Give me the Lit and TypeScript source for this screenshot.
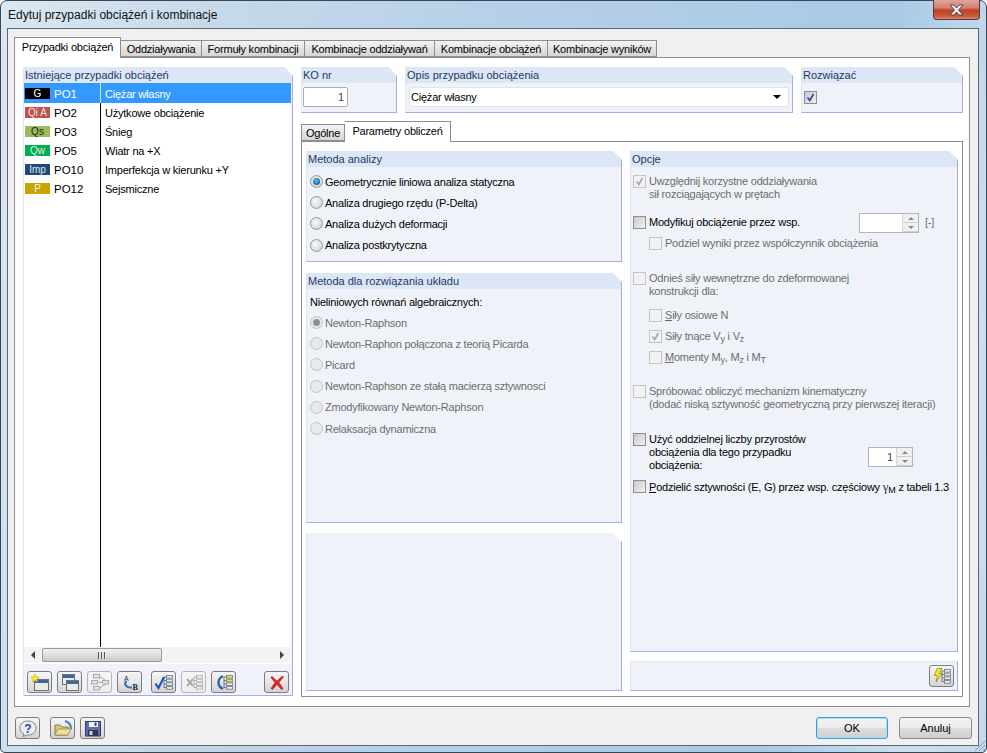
import { LitElement, html, css, svg } from "lit";
import { customElement } from "lit/decorators.js";
import { classMap } from "lit/directives/class-map.js";

const cases = [
  { tag: "G", cls: "g", id: "PO1", name: "Ciężar własny" },
  { tag: "Qi A", cls: "qa", id: "PO2", name: "Użytkowe obciążenie" },
  { tag: "Qs", cls: "qs", id: "PO3", name: "Śnieg" },
  { tag: "Qw", cls: "qw", id: "PO5", name: "Wiatr na +X" },
  { tag: "Imp", cls: "imp", id: "PO10", name: "Imperfekcja w kierunku +Y" },
  { tag: "P", cls: "p", id: "PO12", name: "Sejsmiczne" },
];

const mainTabs = ["Oddziaływania", "Formuły kombinacji", "Kombinacje oddziaływań", "Kombinacje obciążeń", "Kombinacje wyników"];
const analysis = ["Geometrycznie liniowa analiza statyczna", "Analiza drugiego rzędu (P-Delta)", "Analiza dużych deformacji", "Analiza postkrytyczna"];
const solvers = ["Newton-Raphson", "Newton-Raphon połączona z teorią Picarda", "Picard", "Newton-Raphson ze stałą macierzą sztywnosci", "Zmodyfikowany Newton-Raphson", "Relaksacja dynamiczna"];

const icon = (body: unknown) => html`<svg viewBox="0 0 20 17" width="20" height="17">${body}</svg>`;

// small tree list used by several toolbar icons
const treeList = (c = "#6d7680", f = "#e8ecf0", top = f) => svg`
  <path d="M10 3V14M10 3H12M10 6.5H12M10 10H12M10 13.5H12" stroke=${c} fill="none"/>
  <rect x="12.5" y="1.5" width="6" height="2.6" fill=${top} stroke=${c} stroke-width=".8"/>
  <rect x="12.5" y="5.2" width="6" height="2.6" fill=${top} stroke=${c} stroke-width=".8"/>
  <rect x="12.5" y="8.9" width="6" height="2.6" fill=${f} stroke=${c} stroke-width=".8"/>
  <rect x="12.5" y="12.6" width="6" height="2.6" fill=${f} stroke=${c} stroke-width=".8"/>`;

const win = (x: number, y: number, w: number, h: number) => svg`
  <rect x=${x + 0.5} y=${y + 0.5} width=${w} height=${h} fill="#ecebe4" stroke="#6a727c"/>
  <rect x=${x + 1} y=${y + 1} width=${w - 1} height="3" fill="#3f659f"/>`;

const icons = {
  add: icon(svg`${win(4, 5, 14, 11)}
    <path d="M5 0L6.2 2.7L9 3L6.9 5L7.5 8L5 6.4L2.5 8L3.1 5L1 3L3.8 2.7Z" fill="#ffe640" stroke="#c9a800" stroke-width=".6"/>`),
  copy: icon(svg`${win(2, 0, 12, 10)}${win(6, 6, 12, 10)}`),
  flow: icon(svg`<g fill="#e6e6e6" stroke="#a9a9a9">
    <rect x="3.5" y=".5" width="6" height="3.5"/><rect x="3.5" y="12.5" width="6" height="3.5"/>
    <rect x="1.5" y="6.5" width="6" height="3.5"/><rect x="12.5" y="6.5" width="6" height="3.5"/></g>
    <path d="M10 2.5L15 6M10 14L15 10.5M8 8.2H12" stroke="#a9a9a9" fill="none"/>`),
  ab: icon(svg`<text x="4" y="6.5" font-size="7" letter-spacing="0" font-family="Liberation Sans" fill="#333">A</text>
    <path d="M6.5 7C3.5 10 6 14 12 13.5" stroke="#2f6fc0" stroke-width="2" fill="none"/>
    <text x="12.5" y="16" font-size="8" letter-spacing="0" font-weight="700" font-family="Liberation Serif" fill="#222">B</text>`),
  check: icon(svg`${treeList()}<path d="M1.5 9.5L4.5 14L10 3" stroke="#2457c5" stroke-width="2.2" fill="none"/>`),
  cross: icon(svg`${treeList("#adadad", "#eee")}<path d="M3 5L9 12M9 5L3 12" stroke="#aaa" stroke-width="2" fill="none"/>`),
  curve: icon(svg`${treeList("#6d7680", "#e8ecf0", "#f4e23c")}<path d="M9 2C3 5 3 12 9 15" stroke="#2b62b8" stroke-width="2.4" fill="none"/>`),
  del: icon(svg`<path d="M5 2.5L10 7L15.5 2L16.5 3L12 8.5L16 14.5L14.5 15.5L10 10.5L5.5 15.5L4 14.5L8 8.5L3.8 3.5Z" fill="#e0262a" stroke="#a81c1c" stroke-width=".6"/>`),
  help: icon(svg`<path d="M10 1C5 1 2 4 2 8C2 11 4 13 6 14L5 16.5L9 15C14 15.5 18 12.5 18 8C18 4 15 1 10 1Z" fill="#e9edf4" stroke="#7d8794"/>
    <text x="10" y="13" text-anchor="middle" font-size="12" letter-spacing="0" font-weight="700" font-family="Liberation Sans" fill="#2f4a8c">?</text>`),
  open: icon(svg`<path d="M12 1C16 2 18 5 18 9" stroke="#4f7fc0" stroke-width="2" fill="none"/>
    <path d="M2 5H7L9 7H15V15H2Z" fill="#d8c77c" stroke="#8f7f3c"/>
    <path d="M2 15L5 9H18L15 15Z" fill="#eadf9f" stroke="#8f7f3c" stroke-width=".7"/>`),
  save: icon(svg`<rect x="2.5" y="1.5" width="15" height="14.5" fill="#5a6fa8" stroke="#333e66"/>
    <rect x="6" y="2" width="9" height="5" fill="#f2f2f2"/><rect x="11.5" y="2.5" width="2" height="3.5" fill="#3b4a7c"/>
    <rect x="5" y="10" width="10" height="6" fill="#2e3557"/><rect x="6.5" y="11" width="3" height="4" fill="#d6d6d6"/>`),
  bolt: icon(svg`${treeList()}<path d="M5 .5H10L7.5 5.5H10L4 14L5.5 7.5H2.5Z" fill="#f7ea1c" stroke="#8a7c10" stroke-width=".7"/>`),
};

@customElement("app-root")
export class AppRoot extends LitElement {
  static styles = css`
    :host {
      display: block;
      width: 987px;
      height: 753px;
      overflow: hidden;
      font-family: "Liberation Sans", Arial, sans-serif;
      font-size: 11px;
      letter-spacing: -0.22px;
      color: #000;
      background: #fff;
    }
    .window {
      box-sizing: border-box;
      width: 987px;
      height: 753px;
      border: 1px solid #3c4650;
      border-radius: 7px 7px 5px 5px;
      display: flex;
      flex-direction: column;
      position: relative;
      background: linear-gradient(100deg, #dbe7f2 0%, #c6d9ea 20%, #b6d0e8 45%, #a9c9e5 80%, #cde0f2 93%, #c3d9ee 100%);
    }
    .title {
      height: 27px;
      flex: none;
      display: flex;
      align-items: center;
      padding: 0 0 0 7px;
      font-size: 12px;
      letter-spacing: 0;
      color: #111;
    }
    .close {
      position: absolute;
      top: -1px;
      right: 6px;
      width: 47px;
      height: 20px;
      box-sizing: border-box;
      border: 1px solid #5b3a38;
      border-top: none;
      border-radius: 0 0 4px 4px;
      background: linear-gradient(#e0a59c 0%, #d28173 40%, #c23f22 55%, #c75a40 85%, #d98a78 100%);
      display: flex;
      align-items: center;
      justify-content: center;
    }
    .client {
      flex: 1;
      margin: 0 7px 6px 6px;
      border: 1px solid #5c6670;
      background: #f0f0f0;
      display: flex;
      flex-direction: column;
      padding: 8px 8px 0 6px;
      min-height: 0;
    }
    .tabs {
      display: flex;
      align-items: flex-end;
      height: 20px;
      flex: none;
      position: relative;
      z-index: 1;
    }
    .tab {
      box-sizing: border-box;
      height: 17px;
      padding-top: 2px;
      border: 1px solid #8c8e90;
      border-left: none;
      background: linear-gradient(#f4f4f4, #e1e1e1 60%, #d6d6d6);
      text-align: center;
      white-space: nowrap;
    }
    .tab.on {
      height: 21px;
      margin-bottom: -1px;
      padding-top: 3px;
      border-left: 1px solid #8c8e90;
      border-bottom: none;
      background: #fff;
    }
    .pane {
      flex: 1;
      box-sizing: border-box;
      border: 1px solid #8c8e90;
      background: #fff;
      min-height: 0;
      padding: 9px 6px 10px 8px;
      display: grid;
      grid-template-columns: 270px 662px;
      column-gap: 8px;
    }
    .group {
      background: #eff3f9;
      border-right: 1px solid #aaaaea;
      border-bottom: 1px solid #aaaaea;
      border-left: 1px solid #dde6f3;
      box-sizing: border-box;
      clip-path: polygon(0 0, calc(100% - 9px) 0, 100% 9px, 100% 100%, 0 100%);
      display: flex;
      flex-direction: column;
      min-height: 0;
    }
    .head {
      height: 16px;
      flex: none;
      background: #dce6f4;
      color: #1c3a64;
      line-height: 16px;
      padding-left: 2px;
      letter-spacing: 0;
      margin-left: -1px;
    }
    .list {
      flex: 1;
      background: #fff;
      position: relative;
      margin: 0 1px 0 0;
      padding-top: 1px;
      min-height: 0;
    }
    .divider {
      position: absolute;
      left: 76px;
      top: 0;
      bottom: 0;
      width: 1px;
      background: #000;
    }
    .row {
      height: 19px;
      box-sizing: border-box;
      display: flex;
      align-items: center;
      position: relative;
    }
    .row.sel {
      height: 20px;
      margin-top: -1px;
      padding-top: 1px;
      background: #3399ff;
      color: #fff;
    }
    .row.sel .name { border-left: 1px solid #cfe6ff; padding: 1px 0 0 4px; }
    .badge {
      width: 25px;
      height: 11px;
      margin-left: 1px;
      flex: none;
      font-size: 10px;
      letter-spacing: 0;
      line-height: 11px;
      text-align: center;
      color: #e4e4e4;
    }
    .badge.g { background: #000; color: #fff; }
    .badge.qa { background: #c0504d; }
    .badge.qs { background: #9bbb59; color: #222; }
    .badge.qw { background: #00b050; }
    .badge.imp { background: #1f497d; }
    .badge.p { background: #c8a400; color: #eee; }
    .id { width: 50px; padding-left: 4px; box-sizing: border-box; flex: none; font-size: 11.5px; letter-spacing: 0; }
    .name {
      position: absolute;
      left: 76px;
      top: 0;
      bottom: 0;
      padding-left: 5px;
      display: flex;
      align-items: center;
    }
    .hscroll {
      height: 16px;
      flex: none;
      background: #f3f3f3;
      position: relative;
      margin-right: 1px;
      border-bottom: 1px solid #fff;
    }
    .arrow-l, .arrow-r {
      position: absolute;
      width: 0;
      height: 0;
      top: 4px;
      border-top: 4px solid transparent;
      border-bottom: 4px solid transparent;
    }
    .arrow-l { left: 7px; border-right: 4px solid #444; }
    .arrow-r { right: 7px; border-left: 4px solid #444; }
    .thumb {
      position: absolute;
      left: 18px;
      width: 120px;
      height: 14px;
      top: 1px;
      box-sizing: border-box;
      border: 1px solid #9a9a9a;
      border-radius: 2px;
      background: linear-gradient(#f2f2f2, #dcdcdc 55%, #c8c8c8);
      display: flex;
      justify-content: center;
      align-items: center;
      gap: 1px;
    }
    .thumb i { width: 1px; height: 7px; background: #555; border-right: 1px solid #eee; }
    .toolbar {
      height: 31px;
      flex: none;
      display: flex;
      align-items: flex-start;
      padding: 7px 0 0 3px;
      box-sizing: border-box;
      gap: 5px;
    }
    .btn {
      box-sizing: border-box;
      width: 25px;
      height: 22px;
      flex: none;
      border: 1px solid #7d7d7d;
      border-radius: 3px;
      background: linear-gradient(#f6f6f6, #e6e6e6 50%, #d2d2d2);
      display: flex;
      align-items: center;
      justify-content: center;
    }
    .btn.dis { border-color: #b6b6b6; background: linear-gradient(#f6f6f6, #ededed); }
    .toolbar .gap-a { margin-left: 4px; }
    .toolbar .gap-b { margin-left: 23px; }
    .right { display: flex; flex-direction: column; min-height: 0; margin-bottom: -1px; }
    .top {
      display: grid;
      grid-template-columns: 96px 388px 162px;
      column-gap: 8px;
      height: 46px;
      flex: none;
    }
    .input {
      box-sizing: border-box;
      background: #fff;
      border: 1px solid #abadb3;
      border-radius: 2px;
      height: 20px;
      margin: 4px 0 0 1px;
      display: flex;
      align-items: center;
    }
    .ko { width: 45px; margin-left: 1px; justify-content: flex-end; padding-right: 3px; color: #444; }
    .combo { margin: 4px 3px 0 3px; padding: 0 4px 0 1px; border-color: #dfe3ea; justify-content: space-between; }
    .tri { width: 0; height: 0; border-left: 4px solid transparent; border-right: 4px solid transparent; border-top: 4px solid #000; margin-right: 3px; }
    .solve { margin: 8px 0 0 2px; }
    .subtabs { height: 20px; margin-top: 8px; display: flex; align-items: flex-end; flex: none; position: relative; z-index: 1; }
    .subtabs .tab.first { width: 44px; border-left: 1px solid #8c8e90; }
    .subtabs .tab.on { width: 106px; border-left: none; }
    .subpane {
      flex: 1;
      box-sizing: border-box;
      border: 1px solid #8c8e90;
      padding: 9px 4px 5px 4px;
      display: grid;
      grid-template-columns: 316px 328px;
      column-gap: 8px;
      min-height: 0;
    }
    .col { display: flex; flex-direction: column; min-height: 0; }
    .g-analysis { height: 111px; flex: none; }
    .g-solver { height: 250px; flex: none; margin-top: 11px; }
    .g-blank { flex: 1; margin-top: 10px; }
    .g-options { flex: 1; }
    .g-bolt { height: 30px; flex: none; margin-top: 9px; align-items: flex-end; justify-content: center; padding-right: 3px; clip-path: none; border-top: 1px solid #dde6f3; }
    .radios { display: flex; flex-direction: column; padding: 4px 0 0 3px; }
    .radio { height: 21.2px; display: flex; align-items: center; gap: 2px; white-space: nowrap; }
    .nl { height: 18px; padding: 4px 0 0 3px; line-height: 18px; }
    .solver-radios { padding-top: 1px; }
    .dot {
      width: 13px;
      height: 13px;
      box-sizing: border-box;
      flex: none;
      border-radius: 50%;
      border: 1px solid #999;
      background: radial-gradient(circle at 40% 40%, #fbfbfb, #d8d8d8 70%, #bdbdbd);
      display: flex;
      align-items: center;
      justify-content: center;
    }
    .dot.on::after { content: ""; width: 7px; height: 7px; border-radius: 50%; background: radial-gradient(circle at 45% 40%, #66c4ee, #0f5f9c 75%); }
    .off { color: #6d6d6d; }
    .off .dot { border-color: #c2c2c2; background: #e9e9e9; }
    .off .dot.on::after { background: #8f8f8f; }
    .opts { padding: 8px 0 0 2px; display: flex; flex-direction: column; }
    .opt { display: flex; gap: 3px; line-height: 13px; position: relative; white-space: nowrap; }
    .ind { margin-left: 16px; }
    .m8 { margin-top: 8px; }
    .m11 { margin-top: 11px; }
    .m15 { margin-top: 15px; }
    .m21 { margin-top: 21px; }
    .m22 { margin-top: 22px; }
    .box {
      width: 13px;
      height: 13px;
      box-sizing: border-box;
      flex: none;
      border: 1px solid #8e8f8f;
      background: linear-gradient(135deg, #c9c9c9, #f1f1f1);
      display: flex;
      align-items: center;
      justify-content: center;
    }
    .off .box { border-color: #c4c4c4; background: #f2f2f2; }
    .spin {
      position: absolute;
      box-sizing: border-box;
      height: 20px;
      background: #fff;
      border: 1px solid #b3b5ba;
      display: flex;
      justify-content: flex-end;
      align-items: stretch;
    }
    .spin .num { flex: 1; text-align: right; line-height: 18px; padding-right: 3px; color: #444; }
    .spin .sb { width: 15px; display: flex; flex-direction: column; border-left: 1px solid #d5d5d5; }
    .spin .sb span { flex: 1; background: #f0f0f0; display: flex; align-items: center; justify-content: center; border-bottom: 1px solid #d0d0d0; }
    .spin .up { width: 0; height: 0; border-left: 3px solid transparent; border-right: 3px solid transparent; border-bottom: 3px solid #8a8a8a; }
    .spin .dn { width: 0; height: 0; border-left: 3px solid transparent; border-right: 3px solid transparent; border-top: 3px solid #8a8a8a; }
    .s1 { left: 226px; top: -3px; width: 60px; }
    .s2 { left: 235px; top: 14px; width: 45px; }
    .unit { position: absolute; left: 292px; top: 0; color: #6d6d6d; }
    u { text-underline-offset: 1px; }
    sub { font-size: 9px; vertical-align: -2px; line-height: 0; }
    .gm { font-family: "Liberation Serif", serif; font-size: 13px; color: #333; }
    .footer {
      height: 38px;
      flex: none;
      display: flex;
      align-items: flex-start;
      padding: 10px 0 0 1px;
      box-sizing: border-box;
      margin: 0 -2px 0 0;
    }
    .footer .btn { margin-right: 5px; }
    .footer .btn.first { margin-right: 10px; }
    .spacer { flex: 1; }
    .push {
      box-sizing: border-box;
      width: 73px;
      height: 22px;
      border: 1px solid #8a8a8a;
      border-radius: 3px;
      background: linear-gradient(#f4f4f4, #ececec 48%, #dcdcdc 52%, #cfcfcf);
      text-align: center;
      line-height: 20px;
      margin-left: 11px;
      flex: none;
      letter-spacing: 0;
    }
    .push.def { width: 72px; border-color: #3d9fd6; box-shadow: inset 0 0 0 1px #a5e0f7; }
    .grip {
      position: absolute;
      right: 1px;
      bottom: 1px;
      width: 11px;
      height: 11px;
      background: repeating-linear-gradient(135deg, transparent 0 2px, #8b98a6 2px 3px);
      clip-path: polygon(100% 0, 100% 100%, 0 100%);
    }
  `;

  private check(c = "#2b4ea8") {
    return html`<svg viewBox="0 0 11 11" width="11" height="11"><path d="M2.5 5.5L4.8 8.5L8.5 2" stroke=${c} stroke-width="1.7" fill="none"/></svg>`;
  }

  private spinner(cls: string, value = "") {
    return html`<div class="spin ${cls}">
      <span class="num">${value}</span>
      <div class="sb"><span><i class="up"></i></span><span><i class="dn"></i></span></div>
    </div>`;
  }

  private casesPanel() {
    return html`<div class="group">
      <div class="head">Istniejące przypadki obciążeń</div>
      <div class="list">
        <div class="divider"></div>
        ${cases.map(
          (c, i) => html`<div class=${classMap({ row: true, sel: i === 0 })}>
            <span class="badge ${c.cls}">${c.tag}</span>
            <span class="id">${c.id}</span>
            <span class="name">${c.name}</span>
          </div>`
        )}
      </div>
      <div class="hscroll">
        <i class="arrow-l"></i>
        <div class="thumb"><i></i><i></i><i></i></div>
        <i class="arrow-r"></i>
      </div>
      <div class="toolbar">
        <div class="btn">${icons.add}</div>
        <div class="btn">${icons.copy}</div>
        <div class="btn dis">${icons.flow}</div>
        <div class="btn">${icons.ab}</div>
        <div class="btn gap-a">${icons.check}</div>
        <div class="btn dis">${icons.cross}</div>
        <div class="btn">${icons.curve}</div>
        <div class="btn gap-b">${icons.del}</div>
      </div>
    </div>`;
  }

  private optionsPanel() {
    return html`<div class="group g-options">
      <div class="head">Opcje</div>
      <div class="opts">
        <div class="opt off"><span class="box">${this.check("#a8a8a8")}</span><span>Uwzględnij korzystne oddziaływania<br />sił rozciągających w prętach</span></div>
        <div class="opt m15">
          <span class="box"></span><span>Modyfikuj obciążenie przez wsp.</span>
          ${this.spinner("s1")}<span class="unit">[-]</span>
        </div>
        <div class="opt off ind m8"><span class="box"></span><span>Podziel wyniki przez współczynnik obciążenia</span></div>
        <div class="opt off m22"><span class="box"></span><span>Odnieś siły wewnętrzne do zdeformowanej<br />konstrukcji dla:</span></div>
        <div class="opt off ind m11"><span class="box"></span><span><u>S</u>iły osiowe N</span></div>
        <div class="opt off ind m8"><span class="box">${this.check("#a8a8a8")}</span><span>Siły tnące V<sub>y</sub> i V<sub>z</sub></span></div>
        <div class="opt off ind m8"><span class="box"></span><span><u>M</u>omenty M<sub>y</sub>, M<sub>z</sub> i M<sub>T</sub></span></div>
        <div class="opt off m21"><span class="box"></span><span>Spróbować obliczyć mechanizm kinematyczny<br />(dodać niską sztywność geometryczną przy pierwszej iteracji)</span></div>
        <div class="opt m22">
          <span class="box"></span><span>Użyć oddzielnej liczby przyrostów<br />obciążenia dla tego przypadku<br />obciążenia:</span>
          ${this.spinner("s2", "1")}
        </div>
        <div class="opt m8"><span class="box"></span><span><u>P</u>odzielić sztywności (E, G) przez wsp. częściowy <span class="gm">γ</span><sub>M</sub> z tabeli 1.3</span></div>
      </div>
    </div>`;
  }

  render() {
    return html`<div class="window">
      <div class="title">Edytuj przypadki obciążeń i kombinacje</div>
      <div class="close">
        <svg viewBox="0 0 17 12" width="17" height="12"><path d="M2 1H6L8.5 4L11 1H15L10.5 6L15 11H11L8.5 8L6 11H2L6.5 6Z" fill="#f3f3f3" stroke="#4a4a58"/></svg>
      </div>
      <div class="client">
        <div class="tabs">
          <div class="tab on" style="width:107px">Przypadki obciążeń</div>
          ${mainTabs.map((t, i) => html`<div class="tab" style="width:${[81, 103, 130, 113, 109][i]}px">${t}</div>`)}
        </div>
        <div class="pane">
          ${this.casesPanel()}
          <div class="right">
            <div class="top">
              <div class="group"><div class="head">KO nr</div><div class="input ko">1</div></div>
              <div class="group">
                <div class="head">Opis przypadku obciążenia</div>
                <div class="input combo"><span>Ciężar własny</span><i class="tri"></i></div>
              </div>
              <div class="group">
                <div class="head">Rozwiązać</div>
                <div class="box solve">${this.check()}</div>
              </div>
            </div>
            <div class="subtabs">
              <div class="tab first">Ogólne</div>
              <div class="tab on">Parametry obliczeń</div>
            </div>
            <div class="subpane">
              <div class="col">
                <div class="group g-analysis">
                  <div class="head">Metoda analizy</div>
                  <div class="radios">
                    ${analysis.map((t, i) => html`<div class="radio"><span class=${classMap({ dot: true, on: i === 0 })}></span>${t}</div>`)}
                  </div>
                </div>
                <div class="group g-solver">
                  <div class="head">Metoda dla rozwiązania układu</div>
                  <div class="nl">Nieliniowych równań algebraicznych:</div>
                  <div class="radios solver-radios">
                    ${solvers.map((t, i) => html`<div class="radio off"><span class=${classMap({ dot: true, on: i === 0 })}></span>${t}</div>`)}
                  </div>
                </div>
                <div class="group g-blank"></div>
              </div>
              <div class="col">
                ${this.optionsPanel()}
                <div class="group g-bolt"><div class="btn">${icons.bolt}</div></div>
              </div>
            </div>
          </div>
        </div>
        <div class="footer">
          <div class="btn first">${icons.help}</div>
          <div class="btn">${icons.open}</div>
          <div class="btn">${icons.save}</div>
          <div class="spacer"></div>
          <div class="push def">OK</div>
          <div class="push">Anuluj</div>
        </div>
      </div>
      <div class="grip"></div>
    </div>`;
  }
}
